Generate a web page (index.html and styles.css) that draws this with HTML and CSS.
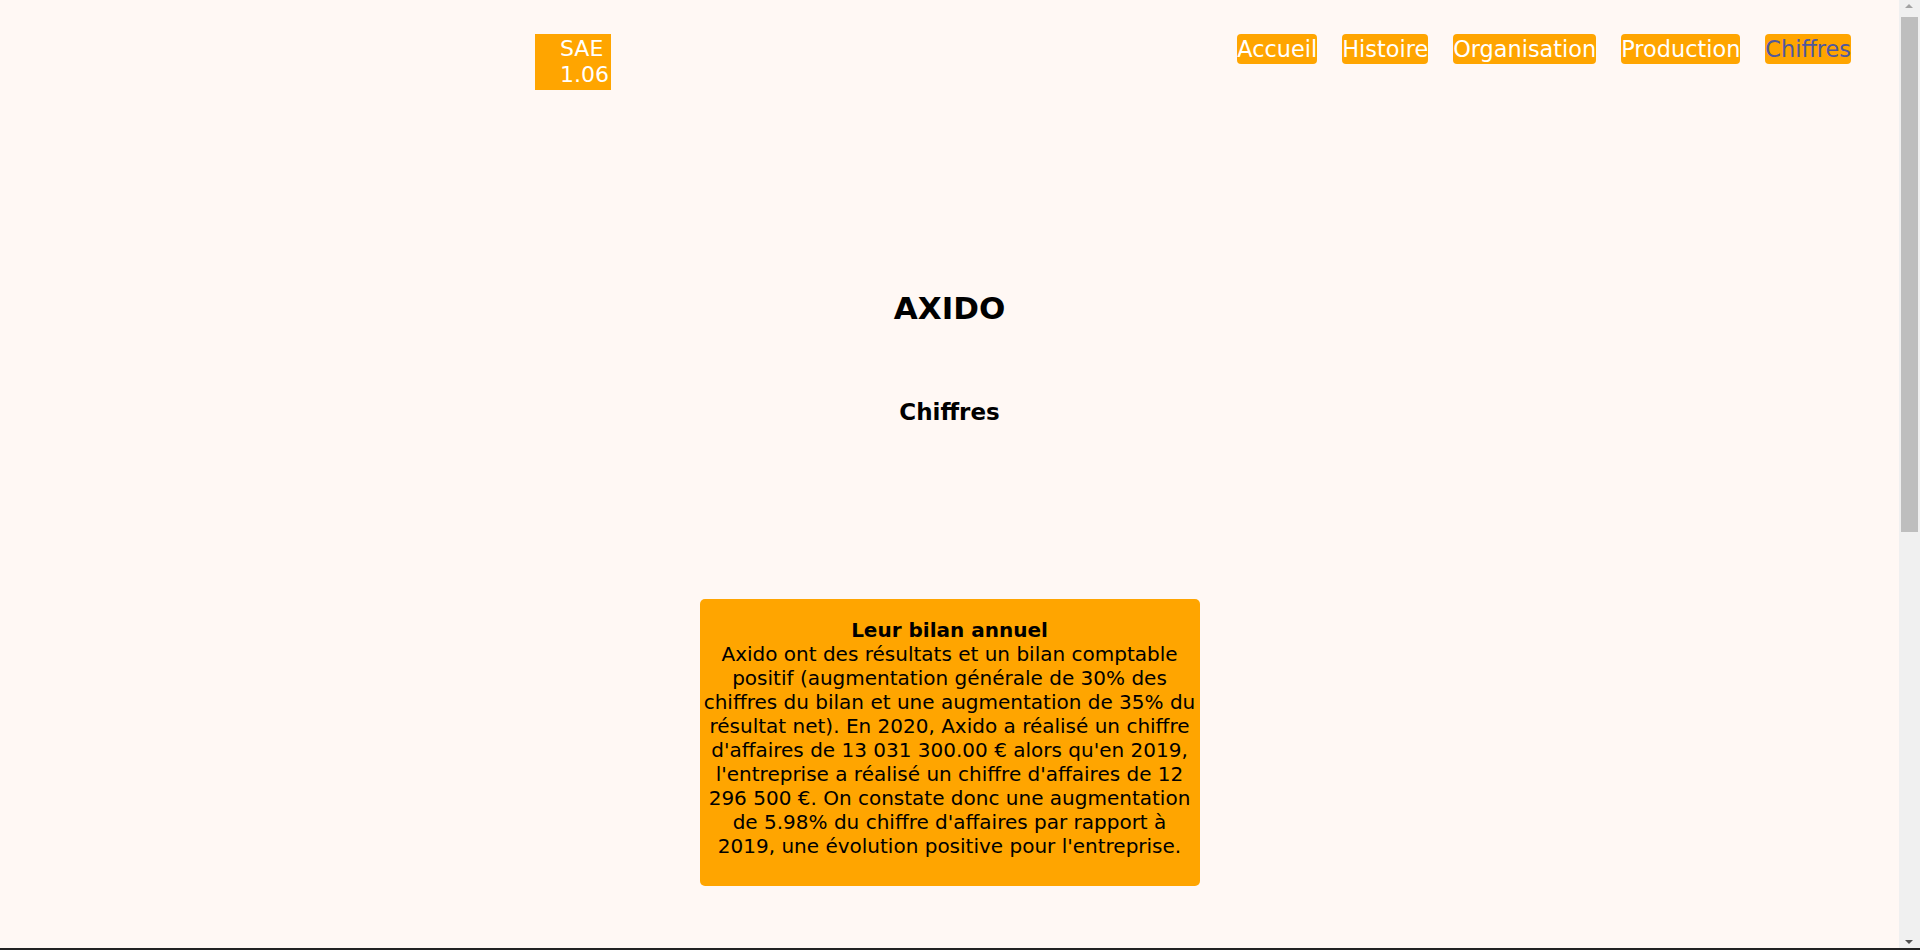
FILE: index.html
```html
<!DOCTYPE html>
<html lang="fr">
<head>
<meta charset="utf-8">
<title>AXIDO - Chiffres</title>
<link rel="stylesheet" href="styles.css">
</head>
<body>
<header class="site-header">
  <a class="logo" href="#">SAE 1.06</a>
  <nav class="nav">
    <a class="nav-link" href="#">Accueil</a>
    <a class="nav-link" href="#">Histoire</a>
    <a class="nav-link" href="#">Organisation</a>
    <a class="nav-link" href="#">Production</a>
    <a class="nav-link active" href="#">Chiffres</a>
  </nav>
</header>
<main class="main">
  <h1 class="title">AXIDO</h1>
  <h2 class="subtitle">Chiffres</h2>
  <section class="card">
    <h3 class="card-title">Leur bilan annuel</h3>
    <p class="card-text">Axido ont des résultats et un bilan comptable positif (augmentation générale de 30% des chiffres du bilan et une augmentation de 35% du résultat net). En 2020, Axido a réalisé un chiffre d'affaires de 13 031 300.00 € alors qu'en 2019, l'entreprise a réalisé un chiffre d'affaires de 12 296 500 €. On constate donc une augmentation de 5.98% du chiffre d'affaires par rapport à 2019, une évolution positive pour l'entreprise.</p>
  </section>
</main>
<footer class="footer"></footer>
<div class="scrollbar" aria-hidden="true">
  <span class="scroll-arrow up"></span>
  <span class="scroll-thumb"></span>
  <span class="scroll-arrow down"></span>
</div>
</body>
</html>
```
FILE: styles.css
```css
html, body {
  margin: 0;
  padding: 0;
}
body {
  box-sizing: border-box;
  padding-right: 21px;
  background: #fff8f4;
  font-family: "DejaVu Sans", Verdana, sans-serif;
  color: #000;
}
.site-header {
  display: flex;
  justify-content: space-between;
  align-items: flex-start;
  padding: 34px 48px 0 535px;
}
.logo {
  display: block;
  box-sizing: border-box;
  width: 76px;
  height: 56px;
  padding: 2px 0 0 25px;
  background: #ffa500;
  color: #fff;
  font-size: 22px;
  line-height: 26px;
  text-align: left;
  text-decoration: none;
}
.nav {
  display: flex;
  gap: 25px;
}
.nav-link {
  display: block;
  height: 30px;
  line-height: 30px;
  font-size: 22.4px;
  color: #fff;
  background: #ffa500;
  border-radius: 4px;
  text-decoration: none;
}
.nav-link.active {
  color: #5058a0;
}
.main {
  display: flex;
  flex-direction: column;
  align-items: center;
  text-align: center;
}
.title {
  margin: 200px 0 0;
  font-size: 31px;
  font-weight: bold;
  line-height: normal;
}
.subtitle {
  margin: 73px 0 0;
  font-size: 23px;
  font-weight: bold;
  line-height: normal;
}
.card {
  box-sizing: border-box;
  width: 500px;
  margin: 174px 0 62px;
  padding: 19px 2px 28px;
  background: #ffa500;
  border-radius: 5px;
  font-size: 20px;
}
.card-title {
  margin: 0;
  font-size: 20px;
  font-weight: bold;
}
.card-text {
  margin: 0;
}
.footer {
  height: 740px;
  margin-right: -21px;
  background: #222;
}
.scrollbar {
  position: fixed;
  top: 0;
  right: 0;
  width: 21px;
  height: 948px;
  background: #f0f0f0;
}
.scroll-thumb {
  position: absolute;
  top: 17px;
  left: 2px;
  width: 17px;
  height: 515px;
  background: #bebebe;
}
.scroll-arrow {
  position: absolute;
  left: 6px;
  width: 0;
  height: 0;
  border-left: 4px solid transparent;
  border-right: 4px solid transparent;
}
.scroll-arrow.up {
  top: 4px;
  border-bottom: 4px solid #a3a3a3;
}
.scroll-arrow.down {
  bottom: 4px;
  border-top: 4px solid #505050;
}
```
